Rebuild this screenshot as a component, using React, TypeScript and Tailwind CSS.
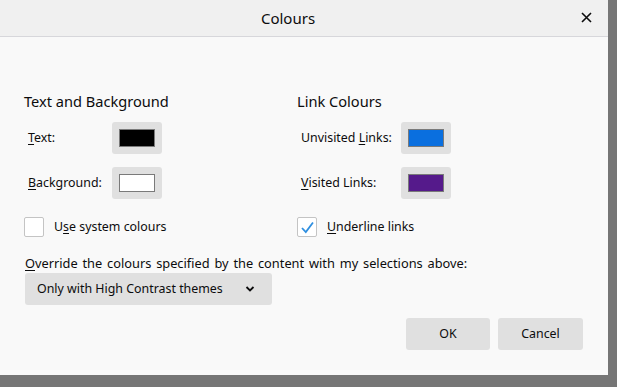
import React from "react";

function Swatch({ color }: { color: string }) {
  return (
    <div className="w-[50px] h-[32px] bg-[#e0e0e0] rounded-[3px] flex items-center justify-center">
      <div className="w-[36px] h-[18px] border border-[#7a7a7a]" style={{ backgroundColor: color }} />
    </div>
  );
}

function Check({ checked }: { checked?: boolean }) {
  return (
    <div className="w-[20px] h-[20px] bg-white border border-[#c4c4c4] rounded-[2px] flex items-center justify-center">
      {checked && (
        <svg width="15" height="15" viewBox="0 0 15 15">
          <path d="M2 8 L5.8 12 L13 2.5" fill="none" stroke="#2f8fe0" strokeWidth="1.8" />
        </svg>
      )}
    </div>
  );
}

function U({ children }: { children: React.ReactNode }) {
  return <span className="underline underline-offset-2 decoration-1">{children}</span>;
}

export default function App() {
  return (
    <div className="w-[617px] h-[387px] bg-[#767676] text-[#0c0c0d]" style={{ fontFamily: '"Noto Sans", "Open Sans", sans-serif' }}>
      <div className="w-[608px] h-[375px] bg-[#f9f9f9] flex flex-col">
        <div className="h-[37px] bg-[#f0f0f0] border-b border-[#d7d7db] flex items-center relative">
          <div className="flex-1 text-center text-[15px] pr-[32px]">Colours</div>
          <div className="absolute right-[14px] top-[9px] w-[16px] h-[16px] flex items-center justify-center">
            <svg width="11" height="11" viewBox="0 0 11 11">
              <path d="M1 1 L10 10 M10 1 L1 10" stroke="#0c0c0d" strokeWidth="1.6" />
            </svg>
          </div>
        </div>
        <div className="px-6 pt-[54px] flex flex-col text-[12.4px]">
          <div className="flex">
            <div className="w-[273px] flex flex-col">
              <div className="text-[14.6px] leading-[20px] mb-[11px]">Text and Background</div>
              <div className="flex items-center h-[32px] pl-[4px]">
                <div className="w-[84px]"><U>T</U>ext:</div>
                <Swatch color="#000000" />
              </div>
              <div className="flex items-center h-[32px] pl-[4px] mt-[13px]">
                <div className="w-[84px]"><U>B</U>ackground:</div>
                <Swatch color="#ffffff" />
              </div>
              <div className="flex items-center mt-[18px] h-[20px]">
                <Check />
                <span className="ml-[10px]">U<U>s</U>e system colours</span>
              </div>
            </div>
            <div className="flex flex-col">
              <div className="text-[14.6px] leading-[20px] mb-[11px]">Link Colours</div>
              <div className="flex items-center h-[32px] pl-[4px]">
                <div className="w-[100px]">Unvisited <U>L</U>inks:</div>
                <Swatch color="#0a6fdf" />
              </div>
              <div className="flex items-center h-[32px] pl-[4px] mt-[13px]">
                <div className="w-[100px]"><U>V</U>isited Links:</div>
                <Swatch color="#551a8b" />
              </div>
              <div className="flex items-center mt-[18px] h-[20px]">
                <Check checked />
                <span className="ml-[10px]"><U>U</U>nderline links</span>
              </div>
            </div>
          </div>
          <div className="mt-[17px] pl-[1px] leading-[18px] text-[12.8px] [word-spacing:1.5px]"><U>O</U>verride the colours specified by the content with my selections above:</div>
          <div className="mt-[1px] ml-[1px] w-[247px] h-[32px] bg-[#e0e0e0] rounded-[3px] flex items-center pl-[12px] pr-[17px]">
            <span className="flex-1">Only with High Contrast themes</span>
            <svg width="10" height="8" viewBox="0 0 10 8">
              <path d="M1.5 2 L5 5.5 L8.5 2" fill="none" stroke="#0c0c0d" strokeWidth="1.8" />
            </svg>
          </div>
          <div className="flex justify-end gap-[8px] mt-[13px] pr-[1px]">
            <div className="w-[84px] h-[32px] bg-[#e0e0e0] rounded-[3px] flex items-center justify-center">OK</div>
            <div className="w-[85px] h-[32px] bg-[#e0e0e0] rounded-[3px] flex items-center justify-center">Cancel</div>
          </div>
        </div>
      </div>
    </div>
  );
}
